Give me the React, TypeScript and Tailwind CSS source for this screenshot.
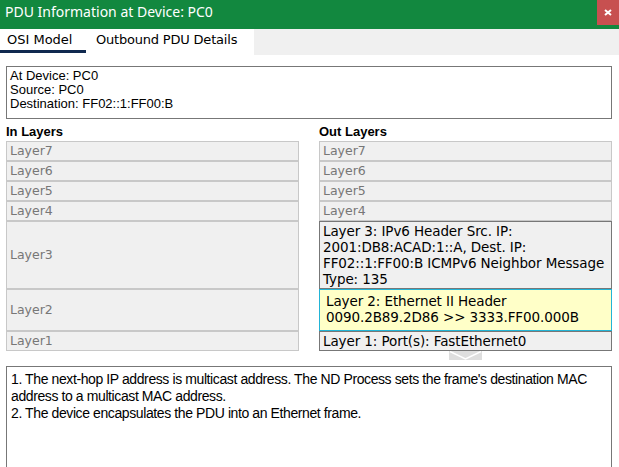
export default function App() {
  const inLayers = ["Layer7", "Layer6", "Layer5", "Layer4"];
  const tahoma = { fontFamily: '"DejaVu Sans", Verdana, sans-serif' };

  return (
    <div className="w-[619px] h-[467px] bg-white overflow-hidden flex flex-col relative">
      {/* Title bar */}
      <div className="h-[29px] shrink-0 bg-[#12883f] flex items-start justify-between">
        <span
          className="text-white text-[14px] leading-[24px] pl-[5px]"
          style={{ fontFamily: '"Noto Sans", "Open Sans", sans-serif' }}
        >
          PDU Information at Device: PC0
        </span>
        <div className="w-[22px] h-[25px] bg-[#c75050] flex items-center justify-center">
          <svg width="8" height="7" viewBox="0 0 8 7">
            <path d="M1 1 L7 6 M7 1 L1 6" stroke="white" strokeWidth="2" />
          </svg>
        </div>
      </div>

      {/* Tabs */}
      <div className="h-[26px] shrink-0 bg-[#f0f0f0] flex">
        <div className="bg-white flex text-[13px] text-black" style={tahoma}>
          <div className="w-[86px] h-[26px] flex flex-col">
            <span className="pl-[7px] h-[21px] leading-[20px] pt-[1px]">OSI Model</span>
            <div className="h-[3px] bg-[#10294f]" />
          </div>
          <div className="w-[168px] pl-[10px] h-[21px] leading-[20px] pt-[1px] tracking-[-0.2px]">Outbound PDU Details</div>
        </div>
      </div>

      {/* Device info */}
      <div
        className="mx-[6px] mt-[11px] w-[606px] h-[53px] border border-[#777] px-[3px] pt-[2px] text-[13px] leading-[14px] text-black"
        style={{ fontFamily: '"Liberation Sans", Arial, sans-serif' }}
      >
        <div>At Device: PC0</div>
        <div>Source: PC0</div>
        <div>Destination: FF02::1:FF00:B</div>
      </div>

      {/* Layers */}
      <div className="flex mt-[5px] pl-[6px]">
        <div className="w-[293px] flex flex-col">
          <div
            className="font-bold text-[13px] leading-[16px] h-[17px] text-black"
            style={{ fontFamily: '"Liberation Sans", Arial, sans-serif' }}
          >
            In Layers
          </div>
          <div className="flex flex-col text-[12.5px] text-[#777]" style={tahoma}>
            {inLayers.map((l) => (
              <div key={l} className="h-[20px] border border-[#c8c8c8] bg-[#f0f0f0] pl-[3px] leading-[18px]">
                {l}
              </div>
            ))}
            <div className="h-[68px] border border-[#c8c8c8] bg-[#f0f0f0] pl-[3px] flex items-center">Layer3</div>
            <div className="h-[42px] border border-[#c8c8c8] bg-[#f0f0f0] pl-[3px] flex items-center">Layer2</div>
            <div className="h-[20px] border border-[#c8c8c8] bg-[#f0f0f0] pl-[3px] leading-[18px]">Layer1</div>
          </div>
        </div>
        <div className="w-[293px] ml-[20px] flex flex-col">
          <div
            className="font-bold text-[13px] leading-[16px] h-[17px] text-black"
            style={{ fontFamily: '"Liberation Sans", Arial, sans-serif' }}
          >
            Out Layers
          </div>
          <div className="flex flex-col text-[12.5px]" style={tahoma}>
            {inLayers.map((l) => (
              <div key={l} className="h-[20px] border border-[#c8c8c8] bg-[#f0f0f0] pl-[3px] leading-[18px] text-[#777]">
                {l}
              </div>
            ))}
            <div className="h-[68px] border border-[#777] bg-[#f0f0f0] pl-[3px] pr-[2px] pt-[1px] leading-[16px] text-[13.5px] tracking-[-0.1px] text-black">
              Layer 3: IPv6 Header Src. IP: 2001:DB8:ACAD:1::A, Dest. IP: FF02::1:FF00:B ICMPv6 Neighbor Message Type: 135
            </div>
            <div className="h-[42px] border border-[#22b4d6] bg-[#ffffc8] pl-[6px] pt-[3px] leading-[16px] text-[13.5px] tracking-[-0.1px] text-black">
              <div>Layer 2: Ethernet II Header</div>
              <div>0090.2B89.2D86 &gt;&gt; 3333.FF00.000B</div>
            </div>
            <div className="h-[20px] border border-[#777] bg-[#f0f0f0] pl-[3px] leading-[18px] text-[13.5px] tracking-[-0.1px] text-black">
              Layer 1: Port(s): FastEthernet0
            </div>
            <div className="ml-[130px] w-[33px] h-[9px] shrink-0 bg-[#dedede]">
              <svg width="33" height="9" viewBox="0 0 33 9" className="block">
                <path d="M1 0.5 L16.5 8 L32 0.5" fill="none" stroke="#ffffff" strokeWidth="1.5" />
              </svg>
            </div>
          </div>
        </div>
      </div>

      {/* Description */}
      <div
        className="mx-[6px] mt-[6px] w-[606px] flex-1 border border-[#777] border-b-0 px-[4px] pt-[4px] text-[14px] leading-[17px] text-black tracking-[-0.4px]"
        style={{ fontFamily: '"Liberation Sans Narrow", "Liberation Sans", Arial, sans-serif' }}
      >
        <div>
          1. The next-hop IP address is multicast address. The ND Process sets the frame's destination MAC address to a multicast MAC address.
        </div>
        <div>2. The device encapsulates the PDU into an Ethernet frame.</div>
      </div>
    </div>
  );
}
